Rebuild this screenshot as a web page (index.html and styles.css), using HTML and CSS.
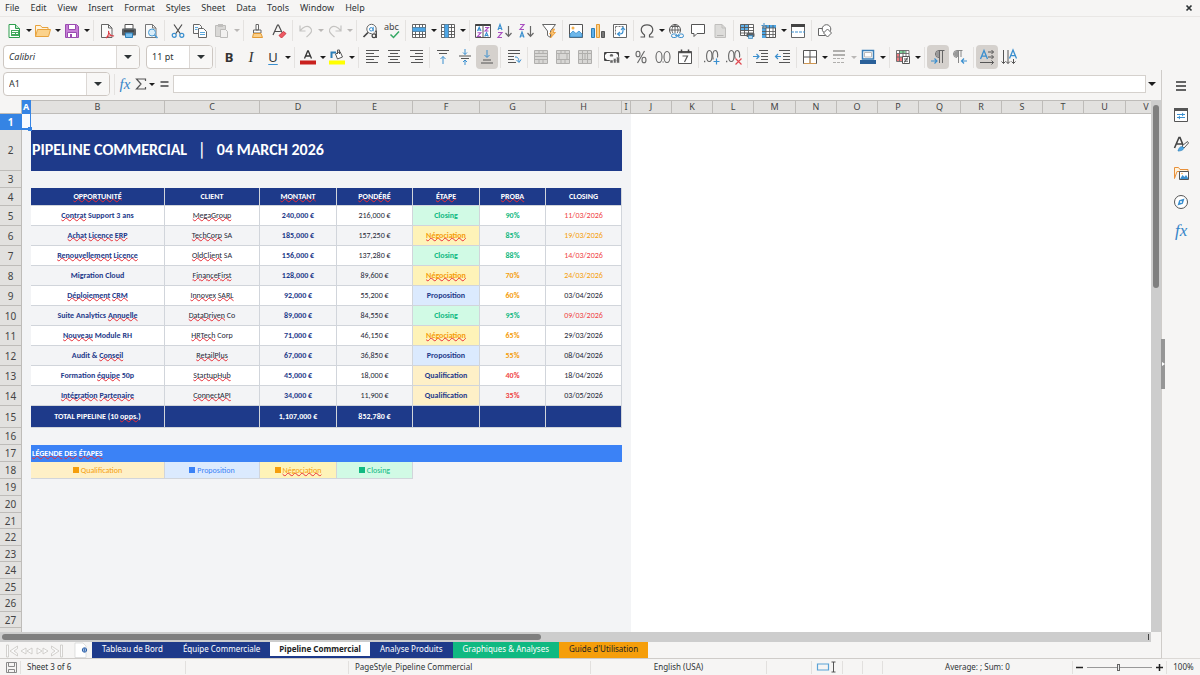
FILE: index.html
```html
<!DOCTYPE html>
<html lang="en">
<head>
<meta charset="utf-8">
<title>Pipeline Commercial</title>
<link rel="stylesheet" href="styles.css">
</head>
<body>
<nav class="menubar">
  <button>File</button><button>Edit</button><button>View</button><button>Insert</button><button>Format</button><button>Styles</button><button>Sheet</button><button>Data</button><button>Tools</button><button>Window</button><button>Help</button>
  <button class="close" aria-label="Close document"><svg width="8" height="8" viewBox="0 0 8 8"><path d="M1.500 1.500 6.500 6.500M6.500 1.500 1.500 6.500" stroke="#2e3436" stroke-width="1.700"/></svg></button>
</nav>

<div class="toolbar" role="toolbar" aria-label="Standard">
  <button class="ic" aria-label="New"><svg viewBox="0 0 16 16"><path d="M3 1.500h6.500l4 4v9H3z" fill="#fff" stroke="#2f9e4f"/><path d="M9.500 1.500v4h4" fill="#bfe6c8" stroke="#2f9e4f"/><path d="M5 7h8v6H5z" fill="#43a85d"/><path d="M6 8.500h6M6 10.500h3M10 10.500h2" stroke="#fff"/></svg></button><button class="dd" aria-label="New options"></button>
  <button class="ic" aria-label="Open"><svg viewBox="0 0 16 16"><path d="M.5 13.500v-11h5l1.500 2h6v2" fill="#fff3dc" stroke="#e8a33d"/><path d="M.5 13.500 2.500 6.500h13l-2 7z" fill="#fbd28b" stroke="#e8a33d"/></svg></button><button class="dd" aria-label="Recent files"></button>
  <button class="ic" aria-label="Save"><svg viewBox="0 0 16 16"><path d="M1.500 1.500h11l2 2v11h-13z" fill="#c67fd6" stroke="#9a4bb0"/><path d="M4.500 1.500h7v5h-7zM3.500 9.500h9v5h-9z" fill="#fff" stroke="#9a4bb0"/><path d="M6 11h2v3H6z" fill="#9a4bb0"/></svg></button><button class="dd" aria-label="Save options"></button>
  <i class="sep"></i>
  <button class="ic" aria-label="Export as PDF"><svg viewBox="0 0 16 16"><path d="M2.500 1.500h7l3.500 3.500v9.500H2.500z" fill="#fafafa" stroke="#666"/><path d="M9.500 1.500v3.500H13" fill="none" stroke="#666"/><path d="M7 15c2-2 3-5 2.500-7 0 3 2.500 5 5.500 5-3-1-6 0-8 2z" fill="none" stroke="#d93a43" stroke-width="1.100"/></svg></button>
  <button class="ic" aria-label="Print"><svg viewBox="0 0 16 16"><path d="M4 1.500h8V6H4z" fill="#fff" stroke="#555"/><rect x="1" y="5.500" width="14" height="7" rx="1" fill="#5b6064"/><path d="M3 8h10" stroke="#2b2f31"/><path d="M4.500 10h7v4.500h-7z" fill="#7cc0ee" stroke="#2d7fb8"/></svg></button>
  <button class="ic" aria-label="Print preview"><svg viewBox="0 0 16 16"><path d="M2.500 1.500h7L13 5v9.500H2.500z" fill="#fafafa" stroke="#777"/><path d="M9.500 1.500V5H13" fill="none" stroke="#777"/><circle cx="9" cy="9.500" r="3.500" fill="#d9edf9" stroke="#4a9ad4"/><path d="m11.500 12 3 3" stroke="#4a9ad4" stroke-width="1.600"/></svg></button>
  <i class="sep"></i>
  <button class="ic" aria-label="Cut"><svg viewBox="0 0 16 16"><path d="M4 1.500 10.500 11M12 1.500 5.500 11" stroke="#4d4d4d" stroke-width="1.200"/><circle cx="4.200" cy="12.300" r="2" fill="none" stroke="#3a8fcf" stroke-width="1.200"/><circle cx="11.800" cy="12.300" r="2" fill="none" stroke="#3a8fcf" stroke-width="1.200"/></svg></button>
  <button class="ic" aria-label="Copy"><svg viewBox="0 0 16 16"><path d="M1.500 1.500h6l2 2v7h-8z" fill="#fafafa" stroke="#666"/><path d="M6.500 5.500h5l3 3v6h-8z" fill="#fff" stroke="#666"/><path d="M3 4.500h3M3 6.500h2.500M8 9.500h5M8 11.500h5" stroke="#5aa7dc"/></svg></button>
  <button class="ic" aria-label="Paste"><svg viewBox="0 0 16 16"><path d="M1.500 2.500h10v11h-10z" fill="#d9d8d6" stroke="#bdbcba"/><path d="M4 1h5v3H4z" fill="#c0bfbd"/><path d="M6.500 6.500h5l2 2v6h-7z" fill="#f2f1f0" stroke="#bdbcba"/></svg></button><button class="dd off" aria-label="Paste options"></button>
  <i class="sep"></i>
  <button class="ic" aria-label="Clone formatting"><svg viewBox="0 0 16 16"><path d="M7 1.500h2.500V7H7zM4.500 7h7.500v3H4.500z" fill="#fff" stroke="#666"/><path d="M4.500 10.500H12l1.500 4h-10z" fill="#fbd08a" stroke="#e39a33"/></svg></button>
  <button class="ic" aria-label="Clear formatting"><svg viewBox="0 0 16 16"><path d="M2 12 6.500 2h1L11 9.500M3.700 8.500h6" fill="none" stroke="#4d4d4d" stroke-width="1.200"/><path d="m8 12.500 4.500-4 2.500 2-4.500 4.500z" fill="#ee5a63" stroke="#cf3a44"/></svg></button>
  <i class="sep"></i>
  <button class="ic" aria-label="Undo"><svg viewBox="0 0 16 16"><path d="M2 2.500V8h5.500M2.300 7.700C5 4 9 2 12 4.500s2 5-3.500 9.500" fill="none" stroke="#c4c3c1" stroke-width="1.200"/></svg></button><button class="dd off" aria-label="Undo history"></button>
  <button class="ic" aria-label="Redo"><svg viewBox="0 0 16 16"><path d="M14 2.500V8H8.500M13.700 7.700C11 4 7 2 4 4.500s-2 5 3.500 9.500" fill="none" stroke="#c4c3c1" stroke-width="1.200"/></svg></button><button class="dd off" aria-label="Redo history"></button>
  <i class="sep"></i>
  <button class="ic" aria-label="Find and replace"><svg viewBox="0 0 16 16"><circle cx="9.500" cy="6" r="4.700" fill="#fff" stroke="#666"/><path d="M6 9.500 1.500 14" stroke="#444" stroke-width="1.700"/><circle cx="9.200" cy="6.300" r="1.700" fill="none" stroke="#3a8fcf"/><path d="M11.200 3.800V8.300" stroke="#3a8fcf"/><path d="M10 9.500h5.500V15H10z" fill="#f6f5f4"/><circle cx="12" cy="12.700" r="1.900" fill="none" stroke="#444" stroke-width="1.200"/><path d="M14.300 7.500V15" stroke="#444" stroke-width="1.200"/></svg></button>
  <button class="ic" aria-label="Spelling"><svg viewBox="0 0 16 16"><text x="0" y="7" font-size="9" fill="#444">abc</text><path d="m6.500 11.500 3 3 5.500-6" fill="none" stroke="#35a864" stroke-width="1.500"/></svg></button>
  <i class="sep"></i>
  <button class="ic" aria-label="Row"><svg viewBox="0 0 16 16"><path d="M1.500 1.500h13v13h-13zM1.500 4.500h13M1.500 8.500h13M1.500 11.500h13M4.500 1.500v13M8.500 1.500v13M11.500 1.500v13" fill="#fff" stroke="#555" stroke-width=".9"/><path d="M1.500 4.500h13v4h-13z" fill="#4da6e6"/></svg></button><button class="dd" aria-label="Row options"></button>
  <button class="ic" aria-label="Column"><svg viewBox="0 0 16 16"><path d="M1.500 1.500h13v13h-13zM1.500 4.500h13M1.500 8.500h13M1.500 11.500h13M4.500 1.500v13M8.500 1.500v13M11.500 1.500v13" fill="#fff" stroke="#555" stroke-width=".9"/><path d="M4.500 1.500h4v13h-4z" fill="#4da6e6"/></svg></button><button class="dd" aria-label="Column options"></button>
  <i class="sep"></i>
  <button class="ic" aria-label="Sort"><svg viewBox="0 0 16 16"><path d="M.5 1.500h15v13H.5z" fill="#fff" stroke="#555"/><path d="M.5 2h15" stroke="#444" stroke-width="2"/><path d="M8 2v12" stroke="#555"/><g fill="none" stroke-width="1.100"><path d="m2.500 8 1.700-4 1.800 4M3 7h2.500M9.800 13.500l1.700-4 1.800 4M10.400 12.500h2.500" stroke="#3a8fcf"/><path d="M2.500 9.700H6l-3.500 3.800H6M10 4.500h3.500L10 8h3.500" stroke="#a94fc0"/></g></svg></button>
  <button class="ic" aria-label="Sort ascending"><svg viewBox="0 0 16 16"><g fill="none" stroke-width="1.200"><path d="M1 7l2-5.500L5 7M1.700 5.500h2.700" stroke="#3a8fcf"/><path d="M1 9.500h4l-4 5h4" stroke="#a94fc0"/><path d="M11.500 3v10M8.500 10l3 3.300 3-3.300" stroke="#666"/></g></svg></button>
  <button class="ic" aria-label="Sort descending"><svg viewBox="0 0 16 16"><g fill="none" stroke-width="1.200"><path d="M1 1.500h4l-4 5h4" stroke="#a94fc0"/><path d="M1 14.500 3 9l2 5.500M1.700 13h2.700" stroke="#3a8fcf"/><path d="M11.500 3v10M8.500 10l3 3.300 3-3.300" stroke="#666"/></g></svg></button>
  <button class="ic" aria-label="AutoFilter"><svg viewBox="0 0 16 16"><path d="M1.500 1.500h13L9.500 8v6.500l-3-2V8z" fill="#fff" stroke="#666"/><path d="m12 6-3.500 5h2.500L9.500 15l5-5.500H12L13.500 6z" fill="#fbc777" stroke="#e8962e" stroke-width=".8"/></svg></button>
  <i class="sep"></i>
  <button class="ic" aria-label="Insert image"><svg viewBox="0 0 16 16"><path d="M1.500 1.500h13v13h-13z" fill="#fff" stroke="#555"/><path d="M2 14v-3l3-3 3 2.500L11 8l3 3v3z" fill="#6db7ea" stroke="#3a8fcf" stroke-width=".8"/><circle cx="5" cy="5" r="1.500" fill="#f5b14e"/></svg></button>
  <button class="ic" aria-label="Insert chart"><svg viewBox="0 0 16 16"><path d="M1.500 5.500h3v9h-3z" fill="#5fb0ea" stroke="#2d7fb8"/><path d="M6.500 1.500h3v13h-3z" fill="#fbd08a" stroke="#e39a33"/><path d="M11.500 8.500h3v6h-3z" fill="#777" stroke="#555"/></svg></button>
  <button class="ic" aria-label="Insert pivot table"><svg viewBox="0 0 16 16"><path d="M1.500 1.500h13v13h-13z" fill="#fff" stroke="#666"/><path d="M3.500 3.500h9M3.500 3.500v9" stroke="#777" stroke-dasharray="2 1"/><path d="M11 5v3a3 3 0 0 1-3 3H6M9 7l2-2.500L13 7M8 9l-2.500 2L8 13" fill="none" stroke="#3a8fcf" stroke-width="1.100"/></svg></button>
  <i class="sep"></i>
  <button class="ic" aria-label="Special character"><svg viewBox="0 0 16 16"><path d="M1.500 14h4v-2C0 8 2 1.800 8 1.800S16 8 10.500 12v2h4" fill="none" stroke="#555" stroke-width="1.200"/></svg></button><button class="dd" aria-label="More characters"></button>
  <button class="ic" aria-label="Insert hyperlink"><svg viewBox="0 0 16 16"><circle cx="7" cy="7" r="5.500" fill="#fff" stroke="#555"/><path d="M1.500 7h11M7 1.500v11M3 3.500h8M7 1.500c-4 3-4 8 0 11M7 1.500c4 3 4 8 0 11" fill="none" stroke="#555" stroke-width=".9"/><path d="M3 10h13v5.500H3z" fill="#f6f5f4"/><rect x="3.500" y="11" width="5.500" height="3.500" rx="1.700" fill="none" stroke="#3a8fcf"/><rect x="10" y="11" width="5.500" height="3.500" rx="1.700" fill="none" stroke="#3a8fcf"/><path d="M7 12.700h5" stroke="#3a8fcf"/></svg></button>
  <button class="ic" aria-label="Insert comment"><svg viewBox="0 0 16 16"><path d="M1.500 1.500h13v9H7L4 13.500v-3H1.500z" fill="#fff" stroke="#555"/></svg></button>
  <button class="ic" aria-label="Headers and footers"><svg viewBox="0 0 16 16"><path d="M3 1.500h7l3.500 3.500v9.500H3z" fill="#dddcda" stroke="#c0bfbd"/><path d="M10 1.500V5h3.500" fill="none" stroke="#c0bfbd"/><path d="M5 12.500h6.500" stroke="#b5b4b2"/></svg></button>
  <i class="sep"></i>
  <button class="ic" aria-label="Define print area"><svg viewBox="0 0 16 16"><path d="M1.500 1.500h13v10h-13z" fill="#fff"/><path d="M1.500 1.500h8v6h-8z" fill="#5fb0ea"/><path d="M1.500 1.500h13v11h-13zM1.500 4.500h13M1.500 7.500h13M1.500 10h13M5.500 1.500v11M9.500 1.500v11" fill="none" stroke="#555" stroke-width=".9"/><rect x="7.500" y="10" width="8" height="4" rx="1" fill="#5b6064"/><path d="M9.500 12.500h4v3h-4z" fill="#a8d5f2" stroke="#2d7fb8" stroke-width=".7"/></svg></button>
  <button class="ic" aria-label="Freeze rows and columns"><svg viewBox="0 0 16 16"><path d="M2 3h12.500v11.500H2z" fill="#fff" stroke="#555"/><path d="M5 2h10v3H5zM1 5h4v10H1z" fill="#4da6e6"/><path d="M5 2v12.500M8.500 2v12.500M12 2v12.500M1 5h14M1 8.500h14M1 11.500h14" stroke="#555" stroke-width=".8"/><path d="M3 0v5M.5 2.500h5" stroke="#3a8fcf" stroke-dasharray="2 1"/></svg></button><button class="dd" aria-label="Freeze options"></button>
  <button class="ic" aria-label="Split window"><svg viewBox="0 0 16 16"><path d="M1.500 1.500h13v13h-13z" fill="#fff" stroke="#666"/><path d="M1 2.500h14" stroke="#444" stroke-width="3"/><path d="M1 9h14" stroke="#3a8fcf" stroke-dasharray="3 1"/></svg></button>
  <i class="sep"></i>
  <button class="ic" aria-label="Show draw functions"><svg viewBox="0 0 16 16"><path d="M1.500 5.500h7v7h-7z" fill="#fff" stroke="#666"/><circle cx="9.500" cy="6" r="4.300" fill="#fff" stroke="#666"/><path d="m10.500 6 4 4-4 4-4-4z" fill="#fff" stroke="#666"/></svg></button>
</div>

<div class="toolbar format" role="toolbar" aria-label="Formatting">
  <div class="combo font"><input type="text" value="Calibri" aria-label="Font name"><button aria-label="Show fonts"></button></div>
  <div class="combo size"><input type="text" value="11 pt" aria-label="Font size"><button aria-label="Show sizes"></button></div>
  <i class="sep"></i>
  <button class="ic glyph b" aria-label="Bold">B</button>
  <button class="ic glyph it" aria-label="Italic">I</button>
  <button class="ic glyph u" aria-label="Underline">U</button><button class="dd" aria-label="Underline styles"></button>
  <i class="sep"></i>
  <button class="ic" aria-label="Font color"><svg viewBox="0 0 16 16"><path d="M4.500 9.500 7.700 2h.6L11.500 9.500M5.800 7h4.400" fill="none" stroke="#333" stroke-width="1.300"/><path d="M0 11.500h16v4H0z" fill="#c9211e"/></svg></button><button class="dd" aria-label="Font colors"></button>
  <button class="ic" aria-label="Highlighting"><svg viewBox="0 0 16 16"><path d="m6.500 5 4.500-2.500 2.500 5.500-5 2z" fill="#fff" stroke="#555"/><path d="M10.500 5V1h-2v4" fill="none" stroke="#555"/><path d="M2.500 9V3.500H7" fill="none" stroke="#2d7fb8" stroke-width="2"/><path d="M0 11.500h16v4H0z" fill="#ff0"/></svg></button><button class="dd" aria-label="Highlight colors"></button>
  <i class="sep"></i>
  <button class="ic" aria-label="Align left"><svg viewBox="0 0 16 16"><path d="M2 1.500h13M2 4.500h8M2 7.500h13M2 10.500h8M2 13.500h12" stroke="#555"/></svg></button>
  <button class="ic" aria-label="Center"><svg viewBox="0 0 16 16"><path d="M2 1.500h12M4 4.500h8M2 7.500h12M4 10.500h8M2 13.500h12" stroke="#555"/></svg></button>
  <button class="ic" aria-label="Align right"><svg viewBox="0 0 16 16"><path d="M2 1.500h13M7 4.500h8M2 7.500h13M7 10.500h8M3 13.500h12" stroke="#555"/></svg></button>
  <i class="sep"></i>
  <button class="ic" aria-label="Align top"><svg viewBox="0 0 16 16"><path d="M2 1.500h12M4 4.500h8" stroke="#555"/><path d="M8 15V7.500M5.500 10 8 7.500l2.500 2.500" fill="none" stroke="#3a8fcf"/></svg></button>
  <button class="ic" aria-label="Center vertically"><svg viewBox="0 0 16 16"><path d="M2 7h12M4 9.500h8" stroke="#555"/><path d="M8 0v5.500M6 3.500l2 2 2-2M8 16v-5M6 13l2-2 2 2" fill="none" stroke="#3a8fcf"/></svg></button>
  <button class="ic on" aria-label="Align bottom"><svg viewBox="0 0 16 16"><path d="M4 11h8M2 14h12" stroke="#555"/><path d="M8 1v7M5.500 6 8 8.500 10.500 6" fill="none" stroke="#3a8fcf"/></svg></button>
  <i class="sep"></i>
  <button class="ic" aria-label="Wrap text"><svg viewBox="0 0 16 16"><path d="M2 1.500h12M2 4.500h12M2 7.500h6M2 10.500h6M2 13.500h8" stroke="#555"/><path d="M9 8c3 0 3.500 1 4 5M10.500 11l2.500 2.500 2-3" fill="none" stroke="#3a8fcf"/></svg></button>
  <i class="sep"></i>
  <button class="ic" aria-label="Merge and center"><svg viewBox="0 0 16 16"><path d="M1.500 1.500h13v13h-13zM1.500 4.500h13M1.500 10.500h13M1.500 7.500h13M6 1.500v3M10 1.500v3M6 10.500v4M10 10.500v4" fill="#d8d7d5" stroke="#b0afad"/></svg></button>
  <button class="ic" aria-label="Merge cells"><svg viewBox="0 0 16 16"><path d="M1.500 1.500h13v13h-13zM1.500 4.500h13M1.500 10.500h13M6 1.500v3M10 1.500v3M6 10.500v4M10 10.500v4M4 4.500v6M12 4.500v6" fill="#d8d7d5" stroke="#b0afad"/></svg></button>
  <button class="ic" aria-label="Split cells"><svg viewBox="0 0 16 16"><path d="M1.500 1.500h13v13h-13zM1.500 4.500h13M1.500 10.500h13M5.500 1.500v13M10.500 1.500v13M8 4.500v6" fill="#d8d7d5" stroke="#b0afad"/></svg></button>
  <i class="sep"></i>
  <button class="ic" aria-label="Format as currency"><svg viewBox="0 0 16 16"><path d="M.5 3.500h14v8H.5z" fill="#fafafa" stroke="#444"/><path d="M1 4h2L1 6zM14 4h-2l2 2zM1 11V9l2 2z" fill="#444"/><path d="M6 7.500a1.700 1.700 0 1 1 3 0" fill="#666"/><path d="M6 11h3v3H6zM9.500 9.500h2.500V14H9.500zM12.500 8h3v6h-3z" fill="#666" stroke="#eee" stroke-width=".5"/></svg></button><button class="dd" aria-label="Currencies"></button>
  <button class="ic" aria-label="Format as percent"><svg viewBox="0 0 16 16"><path d="M11.500 2 4.500 14" stroke="#666" stroke-width="1.100"/><ellipse cx="5" cy="5" rx="2" ry="2.800" fill="none" stroke="#666" stroke-width="1.100"/><ellipse cx="11" cy="11" rx="2" ry="2.800" fill="none" stroke="#666" stroke-width="1.100"/></svg></button>
  <button class="ic" aria-label="Format as number"><svg viewBox="0 0 16 16"><ellipse cx="4" cy="8" rx="3" ry="5.500" fill="none" stroke="#666" stroke-width="1.100"/><ellipse cx="12" cy="8" rx="3" ry="5.500" fill="none" stroke="#666" stroke-width="1.100"/><path d="M7.500 13h1.200" stroke="#666" stroke-width="1.200"/></svg></button>
  <button class="ic" aria-label="Format as date"><svg viewBox="0 0 16 16"><path d="M1.500 2.500h13v12h-13z" fill="#fff" stroke="#555"/><path d="M1 3.500h14" stroke="#555" stroke-width="1.500"/><path d="M4.500.5v3M11.500.5v3" stroke="#444" stroke-width="1.500"/><path d="M5.500 7h5l-3 6" fill="none" stroke="#555" stroke-width="1.200"/></svg></button>
  <i class="sep"></i>
  <button class="ic" aria-label="Add decimal place"><svg viewBox="0 0 16 16"><path d="M0 12.500h1.300" stroke="#666" stroke-width="1.300"/><ellipse cx="5.300" cy="7" rx="2.700" ry="5.500" fill="none" stroke="#666" stroke-width="1.100"/><path d="M13.500 8.500c.5-4-.2-7-2.300-7s-3.200 4-2 9" fill="none" stroke="#666" stroke-width="1.100"/><path d="M12.500 9.500v6M9.500 12.500h6" stroke="#3a8fcf" stroke-width="1.200"/></svg></button>
  <button class="ic" aria-label="Delete decimal place"><svg viewBox="0 0 16 16"><path d="M0 12.500h1.300" stroke="#666" stroke-width="1.300"/><ellipse cx="5.300" cy="7" rx="2.700" ry="5.500" fill="none" stroke="#666" stroke-width="1.100"/><path d="M13.500 8.500c.5-4-.2-7-2.300-7s-3.200 4-2 8" fill="none" stroke="#666" stroke-width="1.100"/><path d="m9.500 9.500 6 6M15.500 9.500l-6 6" stroke="#e04850" stroke-width="1.200"/></svg></button>
  <i class="sep"></i>
  <button class="ic" aria-label="Increase indent"><svg viewBox="0 0 16 16"><path d="M6 1.500h9M8 4.500h7M8 7.500h7M8 10.500h7M3 13.500h12" stroke="#555"/><path d="M0 7.500h5.500M3.500 5l2.500 2.500L3.500 10" fill="none" stroke="#3a8fcf" stroke-width="1.200"/></svg></button>
  <button class="ic" aria-label="Decrease indent"><svg viewBox="0 0 16 16"><path d="M4 1.500h11M8 4.500h7M8 7.500h7M8 10.500h7M4 13.500h11" stroke="#555"/><path d="M.5 7.500H6M3 5 .5 7.500 3 10" fill="none" stroke="#3a8fcf" stroke-width="1.200"/></svg></button>
  <i class="sep"></i>
  <button class="ic" aria-label="Borders"><svg viewBox="0 0 16 16"><path d="M1.500 1.500h13v13h-13z" fill="#fff" stroke="#555"/><path d="M8 2v12M2 8h12" stroke="#555"/><path d="M2 14.500h12M8 9v5" stroke="#f0a850" stroke-width=".8"/></svg></button><button class="dd" aria-label="Border types"></button>
  <button class="ic" aria-label="Border style"><svg viewBox="0 0 16 16"><path d="M2 2h12M2 6h12" stroke="#b0afad" stroke-width="2"/><path d="M2 9.500h12M2 13.500h12" stroke="#b0afad" stroke-dasharray="3 1"/></svg></button><button class="dd off" aria-label="Border styles"></button>
  <button class="ic" aria-label="Border color"><svg viewBox="0 0 16 16"><path d="M2.500 1.500h11v8.500h-11z" fill="#fff" stroke="#3a7fb8" stroke-width="1.500"/><path d="M4.500 3.500h7V8h-7z" fill="none" stroke="#bbb"/><path d="M0 11h16v4H0z" fill="#2a6099"/></svg></button><button class="dd" aria-label="Border colors"></button>
  <i class="sep"></i>
  <button class="ic" aria-label="Conditional formatting"><svg viewBox="0 0 16 16"><path d="M1.500 1.500h13v11h-13z" fill="#fff"/><path d="M4.500 1.500h6v3h-6z" fill="#7fd39a"/><path d="M1.500 5h3v7h-3zM5 8h3v4H5z" fill="#ee7a80"/><path d="M1.500 1.500h12.500v11H1.500zM1.500 4.500H14M1.500 8h12.500M4.500 1.500v11M8 1.500v11M11 1.500v11" fill="none" stroke="#666" stroke-width=".9"/><path d="M7.500 7.500h7v7h-7z" fill="#fff" stroke="#555"/><path d="M9 10h4M9 12.200h4M12.500 8.500l-3 5" stroke="#444" stroke-width=".9"/></svg></button><button class="dd" aria-label="Conditional formats"></button>
  <i class="sep"></i>
  <button class="ic on" aria-label="Left-to-right"><svg viewBox="0 0 16 16"><path d="M14.500 1.500H9a3.500 3.500 0 0 0 0 7M9.500 1.500V14M12.500 1.500V14" fill="none" stroke="#666"/><path d="M9 2v6a3 3 0 0 1 0-6z" fill="#999"/><path d="M1 12h6M4.500 9.500 7 12l-2.500 2.500" fill="none" stroke="#3a8fcf" stroke-width="1.200"/></svg></button>
  <button class="ic" aria-label="Right-to-left"><svg viewBox="0 0 16 16"><path d="M10.500 1.500H5a3.500 3.500 0 0 0 0 7M6.500 1.500V14M9 1.500V8" fill="none" stroke="#888"/><path d="M6 2v6H5a3 3 0 0 1 0-6z" fill="#999"/><path d="M9.500 12H15M12 9.500 9.500 12l2.500 2.500" fill="none" stroke="#3a8fcf" stroke-width="1.200"/></svg></button>
  <i class="sep"></i>
  <button class="ic on" aria-label="Text direction left to right"><svg viewBox="0 0 16 16"><path d="M1.500 10 5 1.500 8.500 10M2.800 7.200h4.400" fill="none" stroke="#3a8fcf" stroke-width="1.300"/><path d="M9 3h5.500M12.500 1l2 2-2 2M9 8h5.500M12.500 6l2 2-2 2M1 13.500h13.500M12.500 11.500l2 2-2 2" fill="none" stroke="#555"/></svg></button>
  <button class="ic" aria-label="Text direction top to bottom"><svg viewBox="0 0 16 16"><path d="M8.500 9.500 12 1l3.500 8.500M9.800 6.700h4.400" fill="none" stroke="#3a8fcf" stroke-width="1.300"/><path d="M2.500 1v13.500M.5 12.500l2 2 2-2M7 1v13.500M5 12.500l2 2 2-2M12.500 10v4.500M10.500 12.500l2 2 2-2" fill="none" stroke="#555"/></svg></button>
</div>

<div class="workspace">
  <main>
    <div class="formula">
      <div class="combo name"><input type="text" value="A1" aria-label="Name box"><button aria-label="Show names"></button></div>
      <i class="sep"></i>
      <button class="fx" aria-label="Function wizard"><i>fx</i></button>
      <button class="sig" aria-label="Select function"><svg width="12" height="12" viewBox="0 0 12 12"><path d="M10.500 3V1h-9L6 6l-4.500 5h9V9" fill="none" stroke="#555" stroke-width="1.200"/></svg></button><button class="dd" aria-label="Function list"></button>
      <button class="eq" aria-label="Formula"><svg width="9" height="8" viewBox="0 0 9 8"><path d="M.5 2h8M.5 6h8" stroke="#444" stroke-width="1.500"/></svg></button>
      <input class="line" type="text" aria-label="Input line">
      <button class="dd expand" aria-label="Expand formula bar"></button>
    </div>
    <div class="gridarea">
      <div class="sheet">
        <table>
          <colgroup><col class="w-rh"><col class="w-a"><col class="w-b"><col class="w-c"><col class="w-d"><col class="w-e"><col class="w-f"><col class="w-g"><col class="w-e"><col class="w-a"><col class="w-j"><col class="w-j"><col class="w-j"><col class="w-m"><col class="w-j"><col class="w-j"><col class="w-j"><col class="w-m"><col class="w-j"><col class="w-j"><col class="w-j"><col class="w-m"><col class="w-j"><col></colgroup>
          <thead><tr><th class="corner"></th><th class="sel">A</th><th>B</th><th>C</th><th>D</th><th>E</th><th>F</th><th>G</th><th>H</th><th>I</th><th>J</th><th>K</th><th>L</th><th>M</th><th>N</th><th>O</th><th>P</th><th>Q</th><th>R</th><th>S</th><th>T</th><th>U</th><th>V</th><th></th></tr></thead>
          <tbody>
          <tr class="r1"><th class="sel">1</th><td class="cursor"><i></i></td><td class="p" colspan="8"></td></tr>
          <tr class="r2"><th>2</th><td class="p"></td><td class="title" colspan="7">PIPELINE COMMERCIAL &nbsp; │ &nbsp; 04 MARCH 2026</td><td class="p"></td></tr>
          <tr class="r17"><th>3</th><td class="p" colspan="9"></td></tr>
          <tr class="r4 head"><th>4</th><td class="p"></td><td><u>OPPORTUNITÉ</u></td><td>CLIENT</td><td><u>MONTANT</u></td><td><u>PONDÉRÉ</u></td><td><u>ÉTAPE</u></td><td><u>PROBA</u></td><td>CLOSING</td><td class="p"></td></tr>
          <tr class="row"><th>5</th><td class="p"></td><td class="n"><u>Contrat</u> Support 3 ans</td><td><u>MegaGroup</u></td><td class="n">240,000 €</td><td>216,000 €</td><td class="clo">Closing</td><td class="g">90%</td><td class="red">11/03/2026</td><td class="p"></td></tr>
          <tr class="row alt"><th>6</th><td class="p"></td><td class="n"><u>Achat</u> <u>Licence</u> <u>ERP</u></td><td><u>TechCorp</u> SA</td><td class="n">185,000 €</td><td>157,250 €</td><td class="neg"><u>Négociation</u></td><td class="g">85%</td><td class="or">19/03/2026</td><td class="p"></td></tr>
          <tr class="row"><th>7</th><td class="p"></td><td class="n"><u>Renouvellement</u> <u>Licence</u></td><td><u>OldClient</u> SA</td><td class="n">156,000 €</td><td>137,280 €</td><td class="clo">Closing</td><td class="g">88%</td><td class="red">14/03/2026</td><td class="p"></td></tr>
          <tr class="row alt"><th>8</th><td class="p"></td><td class="n">Migration Cloud</td><td><u>FinanceFirst</u></td><td class="n">128,000 €</td><td>89,600 €</td><td class="neg"><u>Négociation</u></td><td class="or b">70%</td><td class="or">24/03/2026</td><td class="p"></td></tr>
          <tr class="row"><th>9</th><td class="p"></td><td class="n"><u>Déploiement</u> <u>CRM</u></td><td><u>Innovex</u> <u>SARL</u></td><td class="n">92,000 €</td><td>55,200 €</td><td class="pro">Proposition</td><td class="or b">60%</td><td>03/04/2026</td><td class="p"></td></tr>
          <tr class="row alt"><th>10</th><td class="p"></td><td class="n">Suite Analytics <u>Annuelle</u></td><td><u>DataDriven</u> Co</td><td class="n">89,000 €</td><td>84,550 €</td><td class="clo">Closing</td><td class="g">95%</td><td class="red">09/03/2026</td><td class="p"></td></tr>
          <tr class="row"><th>11</th><td class="p"></td><td class="n"><u>Nouveau</u> Module RH</td><td><u>HRTech</u> Corp</td><td class="n">71,000 €</td><td>46,150 €</td><td class="neg"><u>Négociation</u></td><td class="or b">65%</td><td>29/03/2026</td><td class="p"></td></tr>
          <tr class="row alt"><th>12</th><td class="p"></td><td class="n">Audit &amp; <u>Conseil</u></td><td><u>RetailPlus</u></td><td class="n">67,000 €</td><td>36,850 €</td><td class="pro">Proposition</td><td class="or b">55%</td><td>08/04/2026</td><td class="p"></td></tr>
          <tr class="row"><th>13</th><td class="p"></td><td class="n">Formation <u>équipe</u> 50p</td><td><u>StartupHub</u></td><td class="n">45,000 €</td><td>18,000 €</td><td class="qua">Qualification</td><td class="red b">40%</td><td>18/04/2026</td><td class="p"></td></tr>
          <tr class="row alt"><th>14</th><td class="p"></td><td class="n"><u>Intégration</u> <u>Partenaire</u></td><td><u>ConnectAPI</u></td><td class="n">34,000 €</td><td>11,900 €</td><td class="qua">Qualification</td><td class="red b">35%</td><td>03/05/2026</td><td class="p"></td></tr>
          <tr class="r15 head"><th>15</th><td class="p"></td><td>TOTAL PIPELINE (10 <u>opps.</u>)</td><td></td><td>1,107,000 €</td><td>852,780 €</td><td></td><td></td><td></td><td class="p"></td></tr>
          <tr class="r17"><th>16</th><td class="p" colspan="9"></td></tr>
          <tr class="r17"><th>17</th><td class="p"></td><td class="legend" colspan="7"><u>LÉGENDE</u> <u>DES</u> <u>ÉTAPES</u></td><td class="p"></td></tr>
          <tr class="r17 key"><th>18</th><td class="p"></td><td class="qua"><i class="sq"></i>Qualification</td><td class="pro"><i class="sq"></i>Proposition</td><td class="neg"><i class="sq"></i><u>Négociation</u></td><td class="clo"><i class="sq"></i>Closing</td><td class="p" colspan="4"></td></tr>
          <tr class="r17"><th>19</th><td class="p" colspan="9"></td></tr>
          <tr class="r17"><th>20</th><td class="p" colspan="9"></td></tr>
          <tr class="r1"><th>21</th><td class="p" colspan="9"></td></tr>
          <tr class="r17"><th>22</th><td class="p" colspan="9"></td></tr>
          <tr class="r1"><th>23</th><td class="p" colspan="9"></td></tr>
          <tr class="r17"><th>24</th><td class="p" colspan="9"></td></tr>
          <tr class="r1"><th>25</th><td class="p" colspan="9"></td></tr>
          <tr class="r17"><th>26</th><td class="p" colspan="9"></td></tr>
          <tr class="r1"><th>27</th><td class="p" colspan="9"></td></tr>
          <tr class="r17"><th></th><td class="p" colspan="9"></td></tr>
          </tbody>
        </table>
      </div>
      <div class="vscroll"><i></i></div>
      <div class="hscroll"><i></i><b></b></div>
    </div>
    <div class="tabs">
      <button class="nav" aria-label="First sheet"><svg width="14" height="14" viewBox="0 0 14 14"><path d="M1.500 1v12h2V1zM12.500 2 5 7l7.500 5V9.500L9 7l3.500-2.500z"/></svg></button>
      <button class="nav" aria-label="Previous sheet"><svg width="14" height="14" viewBox="0 0 14 14"><path d="M6 4 1 7l5 3zM12 4 7 7l5 3z"/></svg></button>
      <button class="nav" aria-label="Next sheet"><svg width="14" height="14" viewBox="0 0 14 14"><path d="m2 4 5 3-5 3zM8 4l5 3-5 3z"/></svg></button>
      <button class="nav" aria-label="Last sheet"><svg width="14" height="14" viewBox="0 0 14 14"><path d="M12.500 1v12h-2V1zM1.500 2 9 7l-7.500 5V9.500L5 7 1.500 4.500z"/></svg></button>
      <button class="add" aria-label="Add sheet"><svg width="14" height="15" viewBox="0 0 14 15"><path d="M0 0h8l3 3v11.500H0z" fill="#fff" stroke="#ccc" stroke-width=".6"/><circle cx="9.500" cy="7" r="2.200" fill="#dbe7fb" stroke="#2a5fa8"/><path d="M9.500 5v4M7.500 7h4" stroke="#2a5fa8" stroke-width=".7"/></svg></button>
      <button class="tab">Tableau de Bord</button><button class="tab">Équipe Commerciale</button><button class="tab active">Pipeline Commercial</button><button class="tab">Analyse Produits</button><button class="tab green">Graphiques &amp; Analyses</button><button class="tab orange">Guide d'Utilisation</button>
    </div>
  </main>
  <aside>
    <button class="handle" aria-label="Hide sidebar"></button>
    <button aria-label="Sidebar settings"><svg viewBox="0 0 16 16"><path d="M3 4h10M3 8h10M3 12h10" stroke="#333" stroke-width="1.500"/></svg></button>
    <button aria-label="Properties"><svg viewBox="0 0 16 16"><path d="M1.500 1.500h13v13h-13z" fill="#fff" stroke="#555"/><path d="M1 2.500h14" stroke="#555" stroke-width="3"/><path d="M4 7.500h8M4 10.500h8" stroke="#3a8fcf"/><path d="m9 5.500 2 2-2 2zM7 8.500l-2 2 2 2z" fill="#3a8fcf"/></svg></button>
    <button aria-label="Styles"><svg viewBox="0 0 16 16"><path d="M1.500 12 6 1.500h1L10 9M3.300 8h6" fill="none" stroke="#444" stroke-width="1.600"/><path d="m9 10 5.500-4.500L15.500 7 11 12z" fill="#fff" stroke="#555"/><path d="M5 15c1-4 3-5 5-4s0 4-5 4z" fill="#4da6e6" stroke="#2d7fb8" stroke-width=".7"/></svg></button>
    <button aria-label="Gallery"><svg viewBox="0 0 16 16"><path d="M1.500 13.500v-11h4l1.500 2h8v2H4z" fill="#fff3dc" stroke="#e8903a"/><path d="M6.500 6.500h9v8h-9z" fill="#fff" stroke="#555"/><path d="m7 14 2.500-4 2 2 1.500-2 2 3v1z" fill="#3a8fcf"/><circle cx="9" cy="8.500" r=".8" fill="#f5b14e"/></svg></button>
    <button aria-label="Navigator"><svg viewBox="0 0 16 16"><circle cx="8" cy="8" r="6.500" fill="#fff" stroke="#555"/><path d="M11.500 4.500 9.800 9.800 4.500 11.500 6.200 6.200z" fill="#3a8fcf"/><circle cx="8" cy="8" r="1" fill="#fff"/></svg></button>
    <button class="fx" aria-label="Functions"><i>fx</i></button>
  </aside>
</div>

<footer class="status">
  <span class="s-save"><svg width="11" height="11" viewBox="0 0 11 11"><path d="M.5.5h10v10H.5zM2.500.5v4h6v-4M2.500 10.500v-3h6v3" fill="none" stroke="#8a8a8a"/></svg></span>
  <span class="s-sheet">Sheet 3 of 6</span>
  <span class="s-find"></span>
  <span class="s-style">PageStyle_Pipeline Commercial</span>
  <span class="s-lang">English (USA)</span>
  <span class="s-ins"></span>
  <span class="s-mode"><svg width="20" height="12" viewBox="0 0 20 12"><path d="M.5 3h11v6H.5z" fill="none" stroke="#5ba3d6" stroke-width="1.200"/><path d="M14.500 1h4M16.500 1v10M14.500 11h4" fill="none" stroke="#444" stroke-width=".9"/></svg></span>
  <span class="s-x"></span><span class="s-x"></span>
  <span class="s-sum">Average: ; Sum: 0</span>
  <span class="s-zoom"><button aria-label="Zoom out"><svg width="7" height="7" viewBox="0 0 7 7"><path d="M0 3.500h7" stroke="#222" stroke-width="1.500"/></svg></button><input type="range" min="0" max="100" value="48" aria-label="Zoom"><button aria-label="Zoom in"><svg width="7" height="7" viewBox="0 0 7 7"><path d="M0 3.500h7M3.500 0v7" stroke="#222" stroke-width="1.500"/></svg></button></span>
  <span class="s-pct">100%</span>
</footer>
</body>
</html>
```
FILE: styles.css
```css
* { box-sizing: border-box; }
html, body { height: 100%; }
body {
  margin: 0;
  display: flex;
  flex-direction: column;
  overflow: hidden;
  background: #f6f5f4;
  color: #2e3436;
  font: 9px/12px "Noto Sans", sans-serif;
}
button {
  border: 0;
  padding: 0;
  margin: 0;
  background: none;
  color: inherit;
  font: inherit;
  white-space: nowrap;
  flex: none;
}
input { font: inherit; color: inherit; min-width: 0; }
svg { display: block; flex: none; overflow: visible; }
svg text { font-family: "Noto Sans", sans-serif; }

.menubar {
  display: flex;
  flex: none;
  gap: 1px;
  height: 17px;
  align-items: center;
  border-bottom: 1px solid #e9e7e5;
}
.menubar button { padding: 0 5px; }
.menubar .close { margin-left: auto; padding: 0 7px; }

.toolbar {
  display: flex;
  flex: none;
  align-items: center;
  height: 27px;
  padding-left: 3px;
}
.toolbar.format { height: 26px; }
.ic {
  display: grid;
  place-items: center;
  width: 22px;
  height: 24px;
  border-radius: 4px;
}
.ic svg, aside svg { width: 16px; height: 16px; }
.ic.on { background: #d5d1cd; }
.dd {
  display: grid;
  place-items: center;
  width: 7px;
  height: 20px;
}
.dd::before, .combo button::before {
  content: "";
  border: solid transparent;
  border-width: 3px 3px 0;
  border-top-color: #1c1c1c;
}
.combo button::before { border-width: 4px 4px 0; border-top-color: #2e3436; }
.dd.off::before { border-top-color: #bab8b6; }
.sep {
  width: 1px;
  height: 21px;
  margin: 0 2px;
  background: #e4e2e0;
  flex: none;
}
.dd + .sep { margin-left: 3px; }
.glyph { font-size: 13px; line-height: 16px; color: #333; }
.b { font-weight: bold; }
.it { font: italic 15px/16px "Liberation Serif", serif; }
.u { text-decoration: underline #3a8fcf; text-underline-offset: 2px; }

.combo {
  display: flex;
  flex: none;
  height: 24px;
  background: #fff;
  border: 1px solid #cdc7c2;
  border-radius: 4px;
  overflow: hidden;
}
.combo input {
  flex: 1;
  border: 0;
  padding: 0 5px;
  background: none;
  outline: 0;
}
.combo button {
  display: grid;
  place-items: center;
  width: 23px;
  background: #f8f7f6;
  border-left: 1px solid #dcd8d5;
}
.combo.font { width: 137px; margin-right: 6px; font-style: italic; }
.combo.size { width: 67px; }
.combo.name { width: 107px; }

.workspace { display: flex; flex: 1; min-height: 0; }
main { display: flex; flex: 1; flex-direction: column; min-width: 0; }
.formula {
  display: flex;
  flex: none;
  align-items: center;
  height: 30px;
  padding: 0 4px 2px 3px;
}
.formula > .sep { margin: 0 4px; }
.fx { width: 12px; font: 15px/20px "Liberation Serif", serif; color: #3584c8; }
.sig { margin-left: 4px; width: 12px; }
.sig + .dd { width: 8px; margin-left: 1px; }
.eq { width: 17px; display: grid; place-items: center; }
.formula .line {
  flex: 1;
  height: 18px;
  border: 1px solid #d5d1cd;
  background: #fff;
  outline: 0;
}
.expand { width: 11px; }
.expand::before { border-width: 4px 4px 0; }

.gridarea {
  display: grid;
  flex: 1;
  min-height: 0;
  grid-template: 1fr 10px / 1fr 10px;
}
.sheet { overflow: hidden; background: #fff; min-width: 0; }
table {
  width: max(100%, 1208px);
  table-layout: fixed;
  border-collapse: separate;
  border-spacing: 0;
}
.w-rh { width: 22px; }
.w-a { width: 9px; }
.w-b { width: 134px; }
.w-c { width: 95px; }
.w-d { width: 77px; }
.w-e { width: 76px; }
.w-f { width: 67px; }
.w-g { width: 66px; }
.w-j { width: 41px; }
.w-m { width: 42px; }
th, td { padding: 0; white-space: nowrap; }
th {
  background: #e2e1df;
  border: 0 solid #bebcb9;
  border-width: 0 1px 1px 0;
  font-weight: normal;
  color: #444;
}
thead th { height: 14px; border-top-width: 1px; font-size: 9px; line-height: 10px; }
tbody th { font-size: 10px; line-height: 12px; }
th.corner { background: #f6f5f4; border-top: 0; }
th.sel { background: #3584e4; color: #fff; font-weight: bold; border-color: #3584e4; }
tbody td {
  padding-bottom: 1px;
  font: 8px/12px Carlito, Lato, sans-serif;
  color: #1f2937;
  text-align: center;
  border: 0 solid #d1d5db;
  border-width: 0 1px 1px 0;
}
tbody td.p { background: #f3f4f6; border: 0; }
.r1 { height: 16px; }
.r2 { height: 41px; }
.r17 { height: 17px; }
.r4 { height: 18px; }
.r15 { height: 22px; }
.row { height: 20px; }
.row td { background: #fff; }
.row.alt td { background: #f3f4f6; }
.cursor { position: relative; background: #f8fbff; }
tbody td.cursor { border: 1px solid #3584e4; border-width: 0 1px 2px 0; }
.cursor i {
  position: absolute;
  right: -2px;
  bottom: -3px;
  width: 4px;
  height: 4px;
  background: #3584e4;
}
tbody .head td:not(.p) { background: #1e3a8a; color: #fff; font-weight: bold; }
tbody td.title {
  background: #1e3a8a;
  color: #fff;
  text-align: left;
  padding-left: 1px;
  border: 0;
  font-size: 16px;
  line-height: 20px;
  font-weight: bold;
}
tbody td.legend {
  background: #3b82f6;
  color: #fff;
  text-align: left;
  padding-left: 1px;
  border: 0;
  font-weight: bold;
}
td u {
  text-decoration: underline wavy #e8303a 1px;
  text-decoration-skip-ink: none;
  text-underline-offset: -1px;
}
tbody td.n, tbody .row .pro, tbody .row .qua { color: #1e3a8a; font-weight: bold; }
tbody td.g, tbody td.clo { color: #10b981; font-weight: bold; }
tbody td.or, tbody td.neg { color: #f59e0b; }
tbody td.neg { font-weight: bold; }
tbody td.b { font-weight: bold; }
tbody td.red { color: #ef4444; }
tbody tr[class] td.clo { background: #d1fae5; }
tbody tr[class] td.neg { background: #fef3b8; }
tbody tr[class] td.pro { background: #dbeafe; }
tbody tr[class] td.qua { background: #fef0c7; }
tbody .key td { font-weight: normal; }
tbody .key .qua { color: #f59e0b; }
tbody .key .pro { color: #3b82f6; }
.sq {
  display: inline-block;
  width: 6px;
  height: 6px;
  margin-right: 2px;
  background: currentColor;
}

.vscroll { background: #cdcdcd; padding: 5px 2px; }
.vscroll i { display: block; height: 35%; background: #7f7f7f; border-radius: 3px; }
.hscroll { display: flex; background: #cdcdcd; padding: 2px; justify-content: space-between; }
.hscroll i { width: 47%; background: #7f7f7f; border-radius: 3px; }
.hscroll b { width: 1px; background: #444; }

.tabs { display: flex; flex: none; height: 17px; border-bottom: 1px solid #cfccc9; font-size: 8px; }
.nav { width: 15px; padding-top: 1px; }
.nav path { fill: #fafafa; stroke: #c9c6c3; stroke-width: .8; }
.nav:first-child { margin-left: 5px; }
.add { width: 27px; padding-left: 10px; }
.tab {
  padding: 0 10px;
  background: #1e3a8a;
  color: #fff;
  border-bottom: 2px solid #1e3a8a;
}
.tab.active { background: #fff; color: #222; font-weight: bold; padding: 0 9px; }
.tab.green { background: #10b981; border-color: #10b981; }
.tab.orange { background: #f59e0b; border-color: #f59e0b; color: #222; }

aside {
  position: relative;
  display: flex;
  flex: none;
  flex-direction: column;
  align-items: center;
  gap: 5px;
  width: 39px;
  padding-top: 4px;
  border-left: 1px solid #cfccc9;
  border-bottom: 1px solid #dcd9d6;
}
aside button { display: grid; place-items: center; width: 24px; height: 24px; }
aside .fx { font-size: 17px; }
aside .handle {
  position: absolute;
  left: -1px;
  top: 269px;
  width: 4px;
  height: 50px;
  background: #969696;
}
.handle::before {
  content: "";
  border: solid transparent;
  border-width: 2px 0 2px 3px;
  border-left-color: #fff;
}

.status {
  display: flex;
  flex: none;
  align-items: center;
  height: 16px;
  font-size: 8px;
}
.status > span {
  display: flex;
  align-items: center;
  justify-content: center;
  flex: none;
  height: 13px;
  border-right: 1px solid #e2e0de;
}
.status .s-save { width: 21px; padding-left: 3px; }
.status .s-sheet { width: 165px; justify-content: flex-start; padding-left: 6px; }
.status .s-find { width: 163px; }
.status .s-style { flex: 1; justify-content: flex-start; padding-left: 6px; }
.status .s-lang { width: 176px; }
.status .s-ins { width: 45px; }
.status .s-mode { width: 31px; }
.status .s-x { width: 20px; }
.status .s-sum { width: 190px; }
.status .s-zoom { width: 94px; gap: 4px; }
.status .s-pct { width: 33px; border: 0; }
.s-zoom input {
  appearance: none;
  width: 65px;
  height: 12px;
  margin: 0;
  background: linear-gradient(#999, #999) center / 100% 1px no-repeat;
}
.s-zoom input::-webkit-slider-thumb {
  appearance: none;
  width: 3px;
  height: 7px;
  background: #eee;
  border: 1px solid #666;
}
```
